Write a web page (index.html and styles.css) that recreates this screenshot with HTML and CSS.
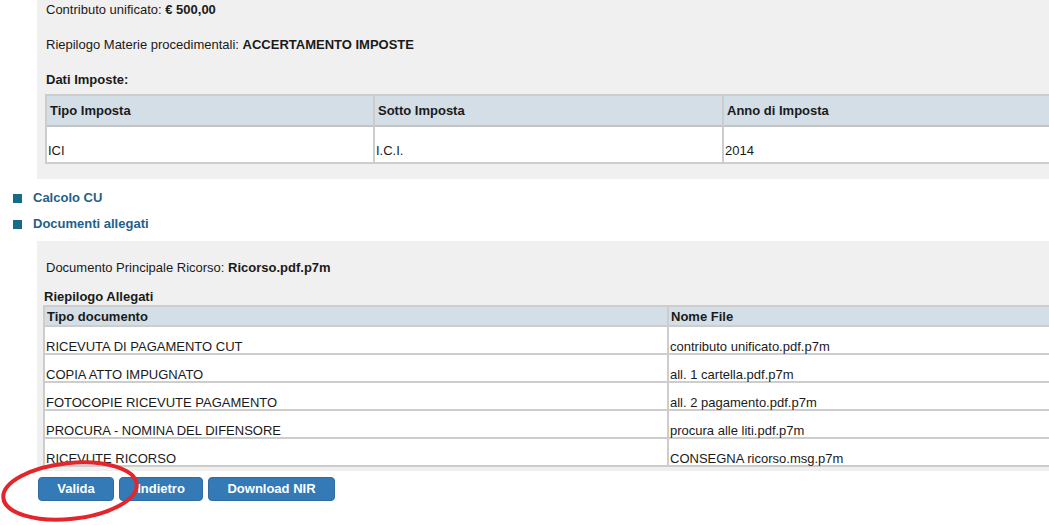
FILE: index.html
```html
<!DOCTYPE html>
<html lang="it">
<head>
<meta charset="utf-8">
<title>Riepilogo ricorso</title>
<link rel="stylesheet" href="styles.css">
</head>
<body>
<div class="page">
  <div class="panel panel-top">
    <p class="line">Contributo unificato: <b>€ 500,00</b></p>
    <p class="line gap">Riepilogo Materie procedimentali: <b>ACCERTAMENTO IMPOSTE</b></p>
    <p class="line gap label">Dati Imposte:</p>
    <table class="grid grid-imposte">
      <thead>
        <tr><th class="c1">Tipo Imposta</th><th class="c2">Sotto Imposta</th><th class="c3">Anno di Imposta</th></tr>
      </thead>
      <tbody>
        <tr><td>ICI</td><td>I.C.I.</td><td>2014</td></tr>
      </tbody>
    </table>
  </div>

  <ul class="sections">
    <li class="section-link">Calcolo CU</li>
    <li class="section-link">Documenti allegati</li>
  </ul>

  <div class="panel panel-docs">
    <p class="line">Documento Principale Ricorso: <b>Ricorso.pdf.p7m</b></p>
    <p class="subtitle">Riepilogo Allegati</p>
    <table class="grid grid-allegati">
      <thead>
        <tr><th class="d1">Tipo documento</th><th class="d2">Nome File</th></tr>
      </thead>
      <tbody>
        <tr><td>RICEVUTA DI PAGAMENTO CUT</td><td>contributo unificato.pdf.p7m</td></tr>
        <tr><td>COPIA ATTO IMPUGNATO</td><td>all. 1 cartella.pdf.p7m</td></tr>
        <tr><td>FOTOCOPIE RICEVUTE PAGAMENTO</td><td>all. 2 pagamento.pdf.p7m</td></tr>
        <tr><td>PROCURA - NOMINA DEL DIFENSORE</td><td>procura alle liti.pdf.p7m</td></tr>
        <tr><td>RICEVUTE RICORSO</td><td>CONSEGNA ricorso.msg.p7m</td></tr>
      </tbody>
    </table>
  </div>

  <div class="actions">
    <button class="btn btn-valida">Valida</button>
    <button class="btn btn-indietro">Indietro</button>
    <button class="btn btn-download">Download NIR</button>
  </div>

  <svg class="annotation" width="150" height="75" viewBox="0 455 150 75">
    <ellipse cx="70" cy="491" rx="67" ry="28" transform="rotate(-6 70 491)" fill="none" stroke="#e3262c" stroke-width="4"/>
  </svg>
</div>
</body>
</html>
```

FILE: styles.css
```css
html, body {
  margin: 0;
  padding: 0;
  background: #ffffff;
  overflow: hidden;
}

body {
  font-family: "Liberation Sans", Arial, sans-serif;
  font-size: 13px;
  color: #1a1a1a;
}

.page {
  position: relative;
  width: 1120px;
  height: 525px;
}

.panel {
  background: #f0f0f0;
  margin-left: 37px;
  padding-left: 9px;
}

.panel-top {
  padding-top: 0;
  padding-bottom: 15px;
}

.line {
  margin: 0;
  line-height: 20px;
}

.line.gap {
  margin-top: 15px;
}

.label {
  font-weight: bold;
}

.grid {
  border-collapse: separate;
  border-spacing: 0;
  table-layout: fixed;
  border-top: 2px solid #cdcdcd;
  border-left: 2px solid #cdcdcd;
}

.grid th,
.grid td {
  box-sizing: border-box;
  border-right: 2px solid #cdcdcd;
  border-bottom: 2px solid #cdcdcd;
  text-align: left;
  line-height: 15px;
  white-space: nowrap;
}

.grid th {
  background: #d3dee7;
  font-weight: bold;
}

.grid td {
  background: #ffffff;
}

.grid-imposte {
  margin-top: 4px;
  margin-left: -1px;
}

.grid-imposte th {
  padding: 7px 3px;
}

.grid-imposte thead th {
  border-bottom: 2px solid #c4c4c4;
}

.grid-imposte td {
  padding: 16px 1px 4px;
}

.c1 { width: 328px; }
.c2 { width: 349px; }
.c3 { width: 350px; }

.sections {
  list-style: none;
  margin: 9px 0 0;
  padding: 0;
}

.section-link {
  display: flex;
  align-items: center;
  gap: 11px;
  margin-left: 13px;
  margin-bottom: 6px;
  line-height: 20px;
  font-weight: bold;
  color: #1f6188;
}

.section-link::before {
  content: "";
  width: 9px;
  height: 9px;
  background: #166a8a;
}

.panel-docs {
  margin-top: 7px;
  padding-top: 17px;
  padding-bottom: 4px;
}

.subtitle {
  margin: 11px 0 0 -2px;
  line-height: 16px;
  font-weight: bold;
}

.grid-allegati {
  margin-top: 0;
  margin-left: -3px;
}

.grid-allegati th {
  padding: 2px 2px 1px;
}

.grid-allegati td {
  padding: 14px 1px 0;
  line-height: 12px;
}

.d1 { width: 624px; }
.d2 { width: 420px; }

.actions {
  display: flex;
  gap: 5px;
  margin: 6px 0 0 38px;
}

.btn {
  font-family: "Liberation Sans", Arial, sans-serif;
  font-size: 13px;
  font-weight: bold;
  line-height: 15px;
  color: #ffffff;
  background: #337ab7;
  border: 1px solid #2e6da4;
  border-radius: 4px;
  padding: 3px 0 4px;
  text-align: center;
}

.btn-valida { width: 76px; }
.btn-indietro { width: 84px; }
.btn-download { width: 127px; }

.annotation {
  position: absolute;
  left: 0;
  top: 455px;
  pointer-events: none;
}
```
